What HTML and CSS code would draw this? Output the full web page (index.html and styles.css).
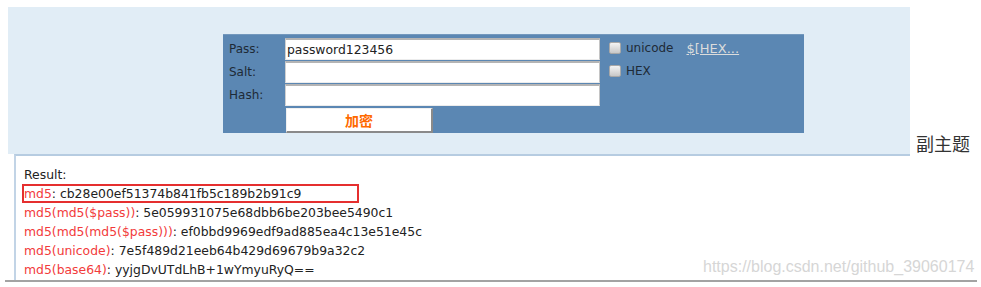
FILE: index.html
```html
<!DOCTYPE html>
<html lang="zh">
<head>
    <meta charset="UTF-8">
    <meta name="viewport" content="width=device-width, initial-scale=1.0">
    <title>md5</title>
    <link rel="stylesheet" href="styles.css">
</head>

<body>
    <div class="page">
        <div class="top">
            <div class="panel">
                <form class="hash-form">
                    <label>Pass:</label>
                    <input class="field" type="text" value="password123456">
                    <div class="opts">
                        <input class="check" type="checkbox"><span>unicode</span>
                        <a class="hex-link" href="#">$[HEX...</a>
                    </div>

                    <label>Salt:</label>
                    <input class="field" type="text">
                    <div class="opts">
                        <input class="check" type="checkbox"><span>HEX</span>
                    </div>

                    <label>Hash:</label>
                    <input class="field" type="text">
                    <div></div>

                    <div></div>
                    <button type="button" class="submit">加密</button>
                </form>
            </div>
            <div class="subtitle">副主题</div>
        </div>

        <div class="result">
            <div class="line">Result:</div>
            <div class="line mark"><span class="key">md5</span>: cb28e00ef51374b841fb5c189b2b91c9</div>
            <div class="line"><span class="key">md5(md5($pass))</span>: 5e059931075e68dbb6be203bee5490c1</div>
            <div class="line"><span class="key">md5(md5(md5($pass)))</span>: ef0bbd9969edf9ad885ea4c13e51e45c</div>
            <div class="line"><span class="key">md5(unicode)</span>: 7e5f489d21eeb64b429d69679b9a32c2</div>
            <div class="line"><span class="key">md5(base64)</span>: yyjgDvUTdLhB+1wYmyuRyQ==</div>
        </div>
        <div class="rule"></div>

        <div class="watermark">https://blog.csdn.net/github_39060174</div>
    </div>
</body>
</html>
```

FILE: styles.css
```css
* {
    box-sizing: border-box;
}

body {
    margin: 0;
    padding: 0;
    background-color: #fff;
    font-family: 'DejaVu Sans', Verdana, sans-serif;
    font-size: 12px;
    color: #222;
}

.page {
    position: relative;
    width: 981px;
    height: 287px;
    overflow: hidden;
}

.top {
    display: flex;
    align-items: flex-end;
    padding: 7px 0 0 8px;
}

.panel {
    width: 902px;
    height: 147px;
    padding: 27px 0 0 215px;
    background-color: #e1edf6;
}

.hash-form {
    display: grid;
    grid-template-columns: 62px 315px 1fr;
    grid-auto-rows: 22px;
    row-gap: 1px;
    width: 581px;
    padding: 3px 0 4px 0;
    background-color: #5b87b3;
    border-top: 1px solid #7398bd;
}

.hash-form label {
    padding-left: 6px;
    line-height: 22px;
    color: #1e2a36;
}

.field {
    height: 22px;
    margin: 0;
    padding: 0 0 0 1px;
    font-family: 'DejaVu Sans', Verdana, sans-serif;
    font-size: 12.4px;
    color: #222;
    background-color: #fff;
    border-top: 2px solid #b4b4b4;
    border-left: 1px solid #d0d0d0;
    border-right: 1px solid #c4c4c4;
    border-bottom: 1px solid #ececec;
    outline: none;
}

.opts {
    display: flex;
    align-items: center;
    padding: 0 0 2px 9px;
    color: #1e2a36;
}

.check {
    appearance: none;
    width: 12px;
    height: 12px;
    margin: 0 5px 0 0;
    border: 1px solid #a8a8a8;
    border-radius: 2px;
    background: linear-gradient(#f4f4f4, #c8c8c8);
}

.hex-link {
    margin-left: 13px;
    font-size: 13px;
    color: #dcdcdc;
    text-decoration: underline;
}

.submit {
    grid-column: 2;
    width: 147px;
    height: 25px;
    margin: 1px 0 0 1px;
    padding: 0;
    font-family: 'Noto Sans CJK SC', sans-serif;
    font-size: 14px;
    font-weight: bold;
    color: #ff6a00;
    background-color: #fff;
    border-top: 1px solid #f0f0f0;
    border-left: 1px solid #f0f0f0;
    border-right: 2px solid #8a8a8a;
    border-bottom: 2px solid #8a8a8a;
    cursor: pointer;
}

.subtitle {
    margin: 0 0 -1px 6px;
    font-family: 'Noto Sans CJK SC', sans-serif;
    font-size: 18px;
    line-height: 24px;
    color: #333;
}

.result {
    width: 896px;
    height: 126px;
    margin-left: 14px;
    padding: 9px 0 0 8px;
    border-top: 2px solid #b6cce1;
    border-left: 2px solid #c2d4e6;
    font-size: 12.4px;
    color: #222;
}

.line {
    height: 19px;
    line-height: 19px;
}

.key {
    color: #f23b3b;
}

.mark {
    width: 337px;
    margin-left: -2px;
    line-height: 15px;
    border: 2px solid #e52f2f;
}

.rule {
    width: 972px;
    height: 2px;
    margin-left: 5px;
    background-color: #a3a3a3;
}

.watermark {
    position: absolute;
    left: 703px;
    top: 258px;
    font-family: 'Liberation Sans', Arial, sans-serif;
    font-size: 16px;
    color: #d6d6d6;
}
```
